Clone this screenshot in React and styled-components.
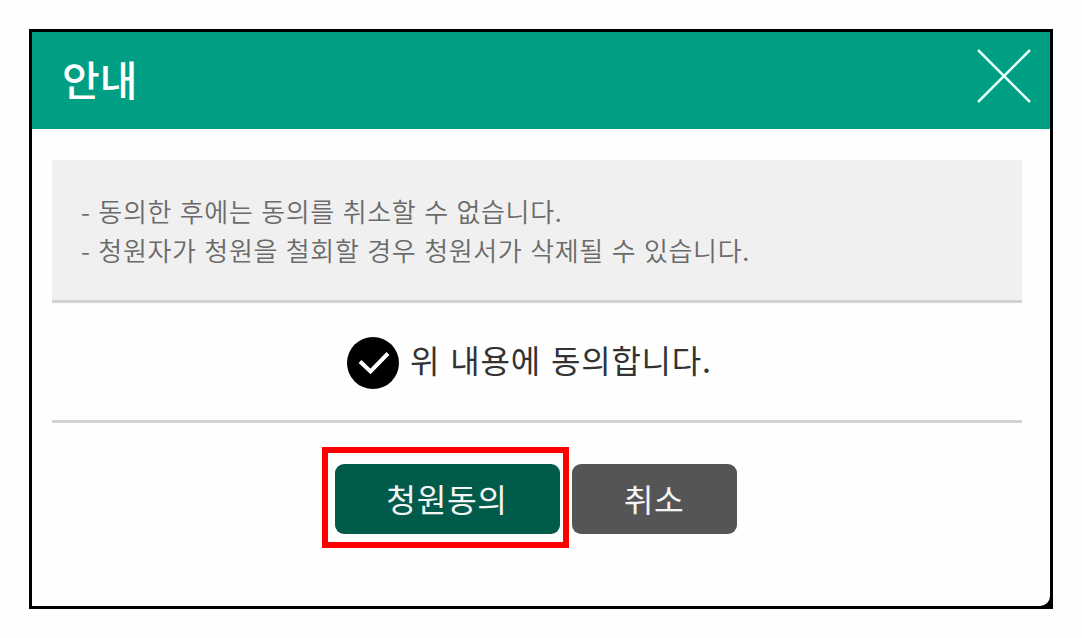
import React from "react";
import styled, { createGlobalStyle } from "styled-components";

const GlobalStyle = createGlobalStyle`
  * {
    box-sizing: border-box;
  }
  body {
    margin: 0;
    background: #fdfdfd;
    font-family: "Noto Sans CJK KR", sans-serif;
  }
`;

const Page = styled.main`
  height: 638px;
  padding: 29px;
`;

const Dialog = styled.section`
  width: 1024px;
  height: 580px;
  padding: 3px 3px 3px 2.5px;
  background: #000;
`;

const Panel = styled.div`
  height: 100%;
  border-bottom-right-radius: 10px;
  background: #fefefe;
`;

const Header = styled.header`
  display: flex;
  justify-content: space-between;
  height: 96.5px;
  padding: 17px 19px 0 30.5px;
  background: #009f83;
`;

const Title = styled.h1`
  margin: 0;
  font-size: 41px;
  line-height: 58px;
  font-weight: 500;
  color: #fff;
`;

const CloseButton = styled.button`
  width: 54px;
  height: 54px;
  padding: 0;
  border: 0;
  background: none;
`;

const Content = styled.div`
  padding: 31px 28px 0 20.5px;
`;

const Notice = styled.ul`
  height: 143px;
  margin: 0;
  padding: 31px 29px;
  list-style: none;
  background: #f0f0f0;
  border-bottom: 3px solid #d3d3d3;
`;

const NoticeItem = styled.li`
  font-size: 26px;
  line-height: 39px;
  font-weight: 350;
  letter-spacing: 0.65px;
  word-spacing: 1.3px;
  color: #6a6a6a;
  white-space: nowrap;
`;

const Agreement = styled.div`
  display: flex;
  gap: 11px;
  height: 120px;
  padding: 34px 0 0 295px;
  border-bottom: 3px solid #d3d3d3;
`;

const AgreementText = styled.span`
  font-size: 32px;
  line-height: 44px;
  letter-spacing: 0.8px;
  word-spacing: 2px;
  color: #333;
  white-space: nowrap;
`;

const Actions = styled.div`
  display: flex;
  gap: 3px;
  padding: 24px 0 0 269.5px;
`;

const Highlight = styled.div`
  width: 247px;
  height: 101px;
  padding: 11px 7px;
  border: 6px solid #fe0000;
`;

const Button = styled.button`
  width: ${(props) => props.$width}px;
  height: 70px;
  margin-top: ${(props) => props.$top || 0}px;
  padding: 0;
  border: 0;
  border-radius: 9px;
  font: 400 32.3px/1 "Noto Sans CJK KR", sans-serif;
  letter-spacing: 0.6px;
  color: #f4f4f4;
  background: ${(props) => props.$color};
`;

function CloseIcon() {
  return (
    <svg width="54" height="54" viewBox="0 0 54 54" fill="none" stroke="#dffff7" strokeWidth="2.6">
      <path d="M1 1L53 53M53 1L1 53" />
    </svg>
  );
}

function CheckIcon() {
  return (
    <svg width="52" height="52" viewBox="0 0 52 52" fill="none">
      <circle cx="26" cy="26" r="26" fill="#000" />
      <path d="M13 24.5L23.5 34.5L41 16.5" stroke="#fff" strokeWidth="4" />
    </svg>
  );
}

export default function App() {
  return (
    <Page>
      <GlobalStyle />
      <Dialog>
        <Panel>
          <Header>
            <Title>안내</Title>
            <CloseButton aria-label="닫기">
              <CloseIcon />
            </CloseButton>
          </Header>
          <Content>
            <Notice>
              <NoticeItem>- 동의한 후에는 동의를 취소할 수 없습니다.</NoticeItem>
              <NoticeItem>- 청원자가 청원을 철회할 경우 청원서가 삭제될 수 있습니다.</NoticeItem>
            </Notice>
            <Agreement>
              <CheckIcon />
              <AgreementText>위 내용에 동의합니다.</AgreementText>
            </Agreement>
            <Actions>
              <Highlight>
                <Button $width={225} $color="#005b4a">청원동의</Button>
              </Highlight>
              <Button $width={165} $top={17} $color="#555">취소</Button>
            </Actions>
          </Content>
        </Panel>
      </Dialog>
    </Page>
  );
}
